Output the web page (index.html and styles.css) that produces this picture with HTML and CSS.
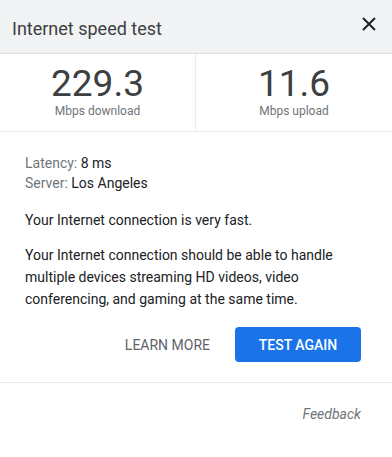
FILE: index.html
```html
<!DOCTYPE html>
<html lang="en">
<head>
<meta charset="utf-8">
<title>Internet speed test</title>
<link rel="stylesheet" href="styles.css">
</head>
<body>
<div class="dialog">
  <header class="header">
    <h1 class="title">Internet speed test</h1>
    <button class="close" aria-label="Close">
      <svg width="14" height="14" viewBox="0 0 14 14"><path d="M1 1L13 13M13 1L1 13" stroke="#202124" stroke-width="2" fill="none"/></svg>
    </button>
  </header>
  <section class="metrics">
    <div class="metric">
      <div class="metric-value">229.3</div>
      <div class="metric-label">Mbps download</div>
    </div>
    <div class="metric">
      <div class="metric-value">11.6</div>
      <div class="metric-label">Mbps upload</div>
    </div>
  </section>
  <section class="content">
    <div class="info">
      <div><span class="info-key">Latency:</span> 8 ms</div>
      <div><span class="info-key">Server:</span> Los Angeles</div>
    </div>
    <p class="para">Your Internet connection is very fast.</p>
    <p class="para">Your Internet connection should be able to handle multiple devices streaming HD videos, video conferencing, and gaming at the same time.</p>
    <div class="actions">
      <button class="btn-text">LEARN MORE</button>
      <button class="btn-primary">TEST AGAIN</button>
    </div>
  </section>
  <footer class="footer">
    <a class="feedback">Feedback</a>
  </footer>
</div>
</body>
</html>
```
FILE: styles.css
```css
* { box-sizing: border-box; }
html, body { margin: 0; padding: 0; background: #fff; }
body { font-family: Roboto, "Liberation Sans", Arial, sans-serif; color: #202124; }
.dialog { width: 392px; }
.header {
  height: 54px;
  background: #f1f3f4;
  border-bottom: 1px solid #dadce0;
  display: flex;
  align-items: center;
  justify-content: space-between;
  padding: 4px 16px 0 12px;
}
.title { margin: 0; font-size: 18px; font-weight: 400; color: #3c4043; }
.close { border: 0; background: none; padding: 0; width: 14px; height: 14px; display: flex; margin-top: -9px; }
.metrics {
  display: grid;
  grid-template-columns: 196px 1fr;
  height: 78px;
  border-bottom: 1px solid #ebebeb;
}
.metric {
  display: flex;
  flex-direction: column;
  align-items: center;
  padding-top: 13px;
}
.metric:first-child { border-right: 1px solid #ebebeb; }
.metric-value { font-size: 37px; line-height: 34px; color: #3c4043; }
.metric-label { font-size: 12px; line-height: 14px; color: #70757a; margin-top: 3px; }
.content { padding: 21px 31px 0 25px; font-size: 14px; }
.info { line-height: 20px; margin-bottom: 16px; }
.info-key { color: #70757a; }
.para { margin: 0 0 13px; line-height: 22px; }
.actions { display: flex; justify-content: flex-end; align-items: center; margin-top: 17px; padding-bottom: 20px; }
.btn-text {
  border: 0; background: none; font-family: inherit; font-size: 14px; font-weight: 400;
  color: #5f6368; padding: 0 25px 0 0; height: 35px;
}
.btn-primary {
  border: 0; background: #1a73e8; color: #fff; font-family: inherit; font-size: 14px; font-weight: 500;
  border-radius: 4px; width: 126px; height: 35px; padding: 0;
}
.footer {
  border-top: 1px solid #ebebeb;
  display: flex;
  justify-content: flex-end;
  padding: 23px 31px 0 25px;
}
.feedback { font-style: italic; font-size: 14px; color: #70757a; }
```
